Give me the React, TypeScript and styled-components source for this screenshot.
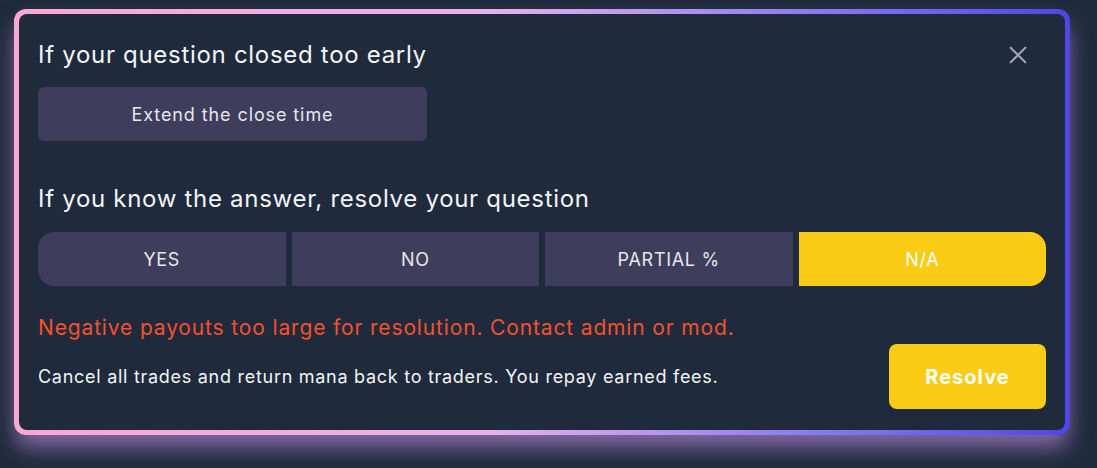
import styled, { createGlobalStyle } from 'styled-components';

const GlobalStyle = createGlobalStyle`
  html, body {
    margin: 0;
    background: #1f2a3c;
  }
  body {
    font-family: Inter, "Noto Sans", sans-serif;
    padding: 9px 27px 0 14px;
    min-height: 100vh;
    box-sizing: border-box;
  }
`;

const answers = ['YES', 'NO', 'PARTIAL %', 'N/A'];

const App = () => {
  const selected = 'N/A';

  return (
    <>
      <GlobalStyle />
      <Frame>
        <Card>
          <HeaderRow>
            <Heading>If your question closed too early</Heading>
            <CloseButton type="button" aria-label="Close">
              <svg width="22" height="22" viewBox="0 0 24 24" fill="none" stroke="currentColor" strokeWidth="2.2" strokeLinecap="round">
                <path d="M4 4l16 16M20 4L4 20" />
              </svg>
            </CloseButton>
          </HeaderRow>
          <ExtendButton type="button">Extend the close time</ExtendButton>

          <Heading $spaced>If you know the answer, resolve your question</Heading>
          <Choices>
            {answers.map((a) => (
              <Choice key={a} type="button" $active={a === selected}>
                {a}
              </Choice>
            ))}
          </Choices>

          <ErrorText>Negative payouts too large for resolution. Contact admin or mod.</ErrorText>
          <FooterRow>
            <Hint>Cancel all trades and return mana back to traders. You repay earned fees.</Hint>
            <ResolveButton type="button">Resolve</ResolveButton>
          </FooterRow>
        </Card>
      </Frame>
    </>
  );
};

const Frame = styled.div`
  width: 1056px;
  padding: 5px;
  box-sizing: border-box;
  border-radius: 12px;
  background: linear-gradient(90deg, #f9a8d4 0%, #e8b0ec 45%, #8b7cf0 75%, #4f46e5 100%);
  box-shadow: 0 14px 22px -2px rgba(220, 160, 255, 0.55);
`;

const Card = styled.div`
  background: #1f2a3c;
  border-radius: 8px;
  padding: 25px 19px 21px 19px;
  display: flex;
  flex-direction: column;
`;

const HeaderRow = styled.div`
  display: flex;
  align-items: center;
  justify-content: space-between;
`;

const Heading = styled.div<{ $spaced?: boolean }>`
  color: #f3f4f6;
  font-size: 24px;
  line-height: 30px;
  letter-spacing: 0.7px;
  margin-top: ${({ $spaced }) => ($spaced ? '43px' : '1px')};
`;

const CloseButton = styled.button`
  background: none;
  border: none;
  padding: 0;
  margin-right: 17px;
  color: #a3a3b8;
  display: flex;
  cursor: pointer;
`;

const ExtendButton = styled.button`
  margin-top: 17px;
  width: 389px;
  height: 54px;
  border: none;
  border-radius: 6px;
  background: #3f3d5c;
  color: #e5e7eb;
  font-family: inherit;
  font-size: 18px;
  letter-spacing: 0.9px;
`;

const Choices = styled.div`
  margin-top: 18px;
  display: grid;
  grid-template-columns: repeat(4, 1fr);
  gap: 6px;
`;

const Choice = styled.button<{ $active: boolean }>`
  height: 54px;
  border: none;
  background: ${({ $active }) => ($active ? '#facc15' : '#3f3d5c')};
  color: ${({ $active }) => ($active ? '#ffffff' : '#e5e7eb')};
  font-family: inherit;
  font-size: 18px;
  letter-spacing: 0.7px;

  &:first-child {
    border-radius: 16px 0 0 16px;
  }
  &:last-child {
    border-radius: 0 16px 16px 0;
  }
`;

const ErrorText = styled.div`
  margin-top: 30px;
  color: #f4512c;
  font-size: 21px;
  line-height: 24px;
  letter-spacing: 0.85px;
`;

const FooterRow = styled.div`
  margin-top: 4px;
  display: flex;
  align-items: center;
  justify-content: space-between;
`;

const Hint = styled.div`
  color: #f3f4f6;
  font-size: 18px;
  letter-spacing: 0.72px;
`;

const ResolveButton = styled.button`
  width: 157px;
  height: 65px;
  border: none;
  border-radius: 8px;
  background: #facc15;
  color: #ffffff;
  font-family: inherit;
  font-size: 20px;
  font-weight: 700;
  letter-spacing: 1px;
`;

export default App;
